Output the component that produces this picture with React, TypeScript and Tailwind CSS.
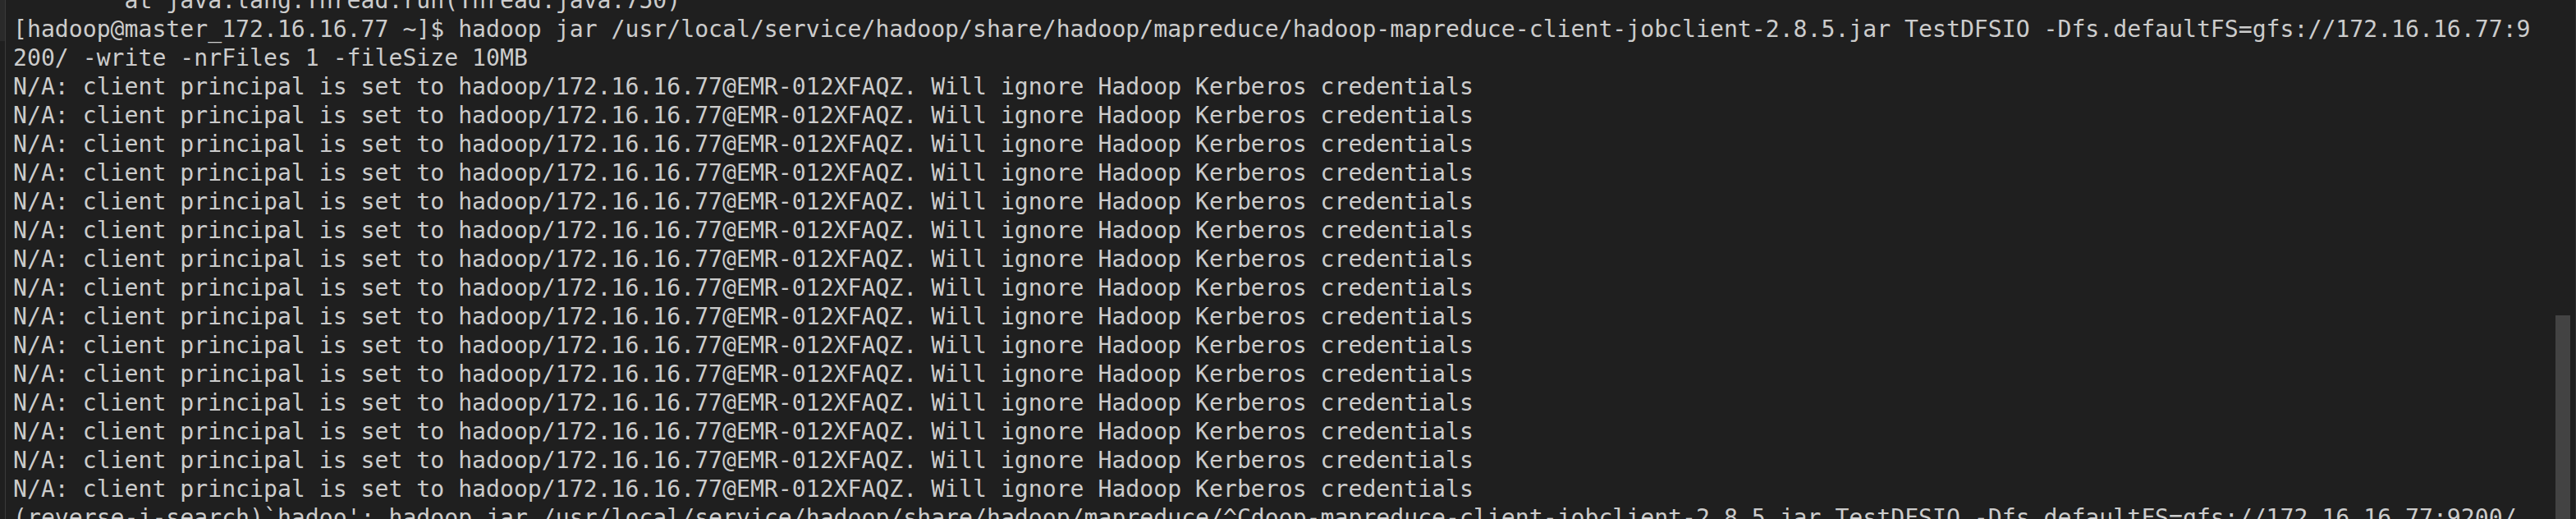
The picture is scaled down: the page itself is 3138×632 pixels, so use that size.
const prompt =
  "[hadoop@master_172.16.16.77 ~]$ hadoop jar /usr/local/service/hadoop/share/hadoop/mapreduce/hadoop-mapreduce-client-jobclient-2.8.5.jar TestDFSIO -Dfs.defaultFS=gfs://172.16.16.77:9";

const warning =
  "N/A: client principal is set to hadoop/172.16.16.77@EMR-012XFAQZ. Will ignore Hadoop Kerberos credentials";

const lines: string[] = [
  "        at java.lang.Thread.run(Thread.java:750)",
  prompt,
  "200/ -write -nrFiles 1 -fileSize 10MB",
  ...Array.from({ length: 15 }, () => warning),
  "(reverse-i-search)`hadoo': hadoop jar /usr/local/service/hadoop/share/hadoop/mapreduce/^Cdoop-mapreduce-client-jobclient-2.8.5.jar TestDFSIO -Dfs.defaultFS=gfs://172.16.16.77:9200/",
];

export default function App() {
  return (
    <div className="h-[632px] w-[3138px] overflow-hidden bg-[#1f1f1f] flex">
      {/* left gutter */}
      <div className="w-[6px] flex flex-col">
        <div className="h-[50px] bg-[#2a2a2a]" />
        <div className="grow bg-[#1f1f1f]" />
      </div>
      <div className="w-px bg-[#3a3a3a]" />

      {/* terminal output */}
      <div className="grow overflow-hidden pl-[9px] -mt-[17px]">
        {lines.map((line, i) => (
          <div
            key={i}
            className="h-[35px] leading-[35px] whitespace-pre text-[28.15px] text-[#cccccc] font-['DejaVu_Sans_Mono',monospace]"
          >
            {line}
          </div>
        ))}
      </div>

      {/* scrollbar */}
      <div className="w-[27px] flex flex-col pt-[384px] pl-[3px] pr-[6px]">
        <div className="grow bg-[#434343]" />
      </div>
      <div className="w-px bg-[#2e2e2e]" />
    </div>
  );
}
